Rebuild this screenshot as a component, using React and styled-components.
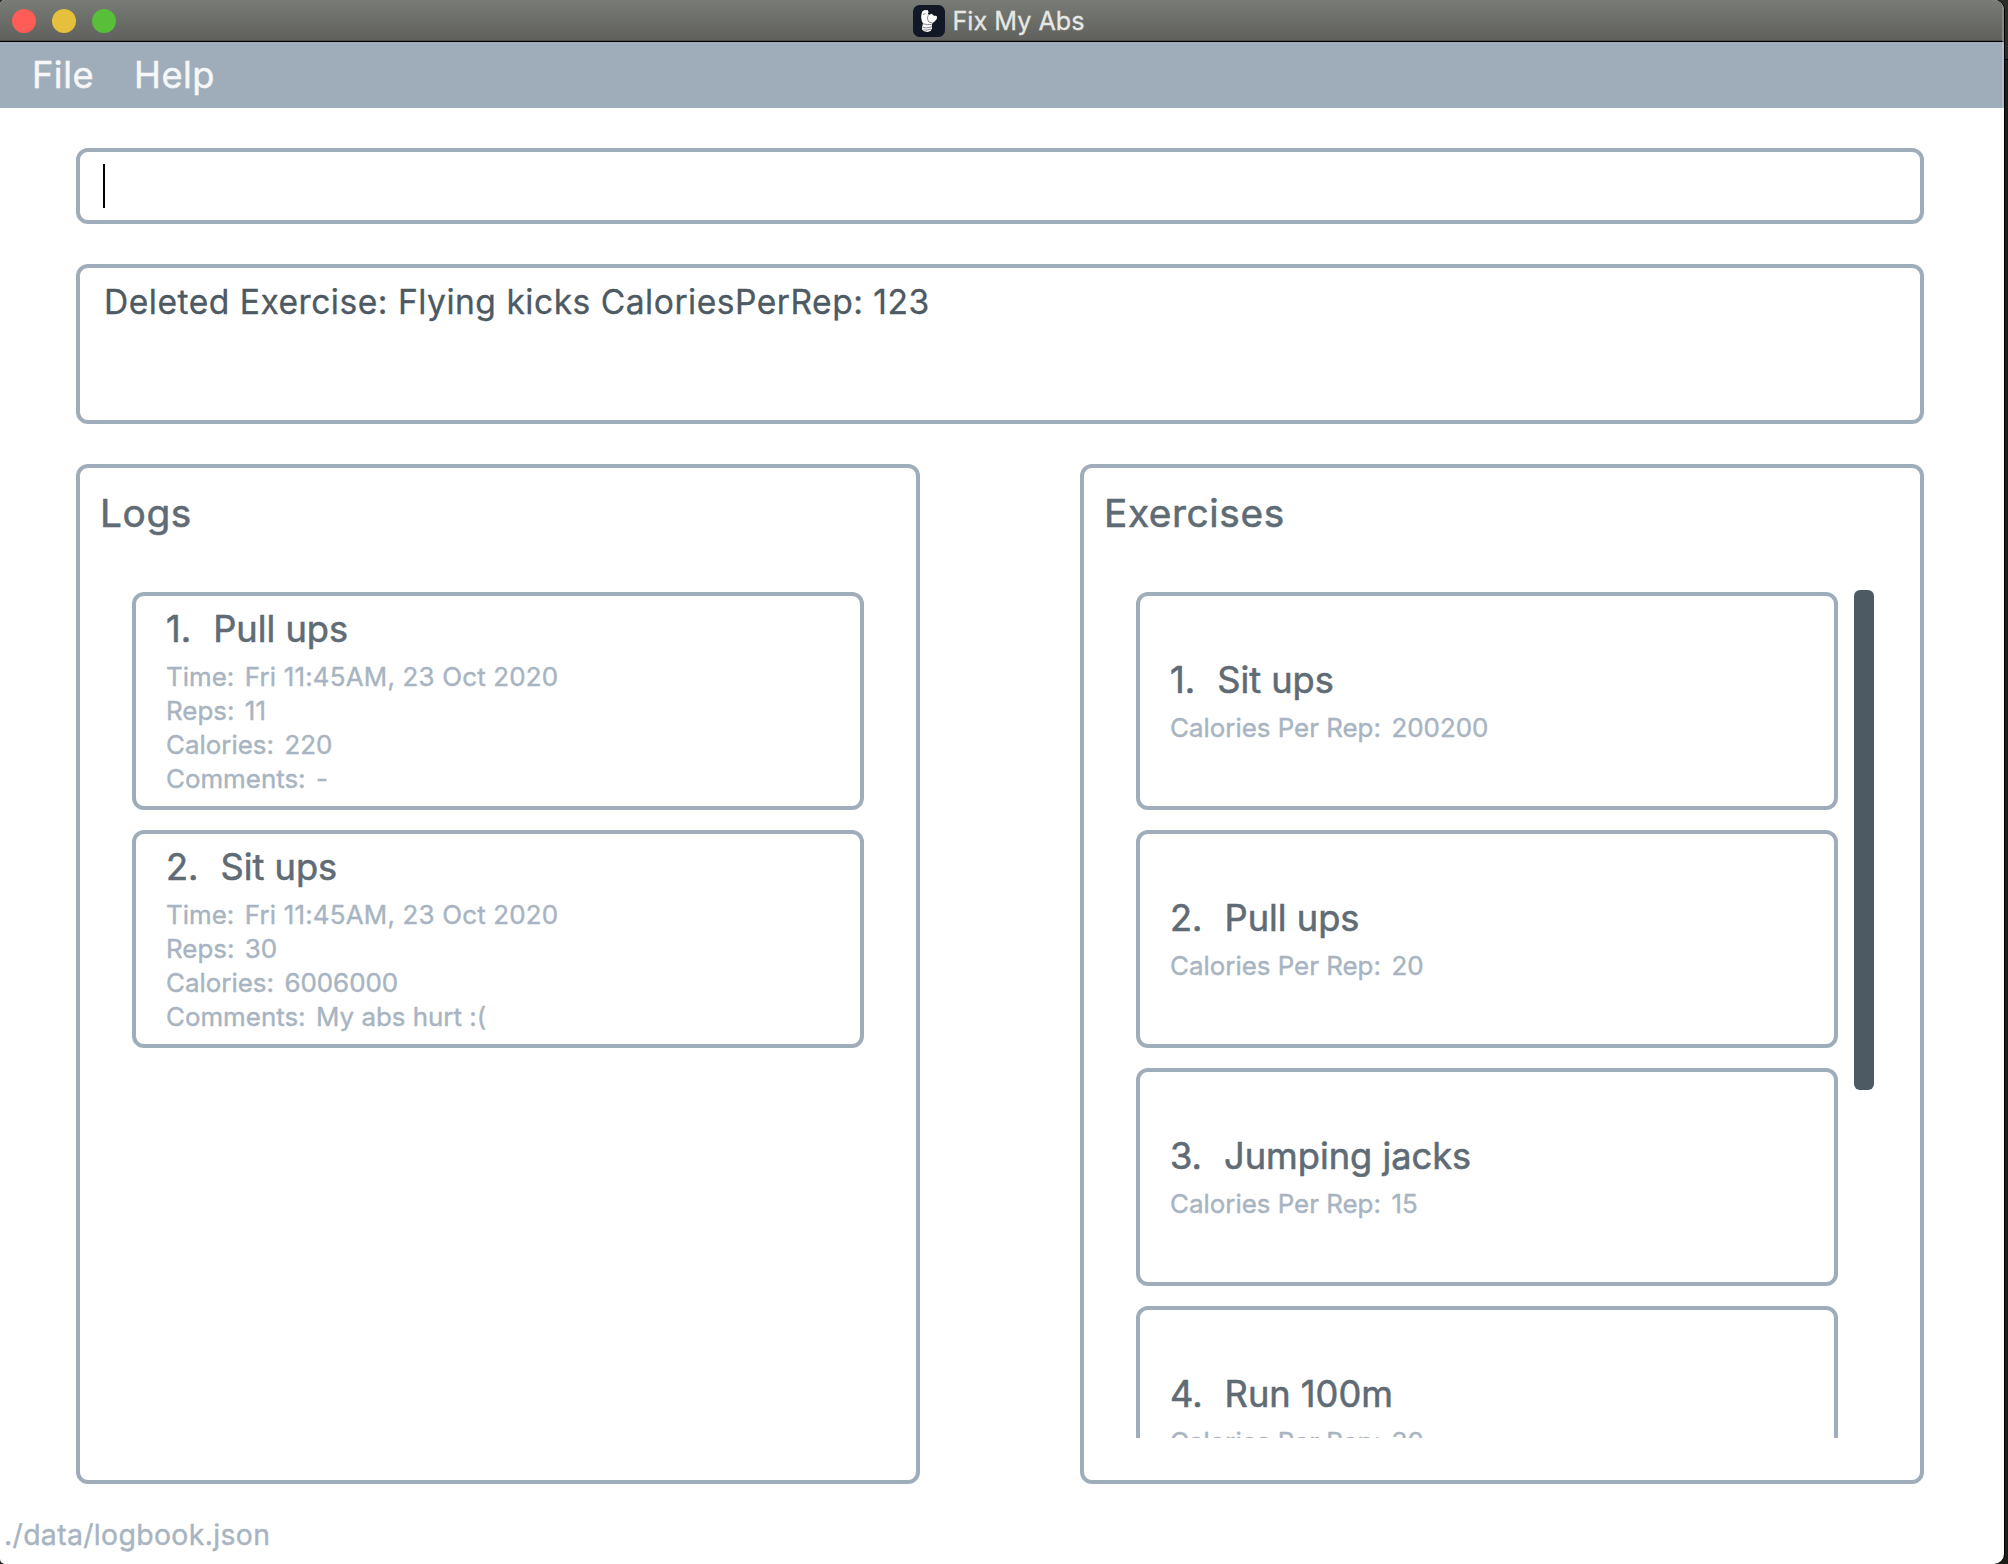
import React from "react";
import styled, { createGlobalStyle } from "styled-components";

const GlobalStyle = createGlobalStyle`
  *, *::before, *::after { box-sizing: border-box; }
  body {
    margin: 0;
    background: #1c1c17;
    font-family: Inter, "Liberation Sans", sans-serif;
    overflow: hidden;
  }
`;

const slate = "#9fadba";

const Desktop = styled.div`
  display: flex;
  width: 2008px;
  height: 1564px;
  background: linear-gradient(#2b2d29 0 59px, #000 59px 60px, #1d1d18 60px);
`;

const Window = styled.div`
  display: flex;
  flex-direction: column;
  width: 2004px;
  height: 1564px;
  background: #fff;
  border-radius: 5px 10px 10px 5px;
  box-shadow: 1px 0 0 #000;
  overflow: hidden;
`;

const TitleBar = styled.header`
  display: grid;
  grid-template-columns: 1fr auto 1fr;
  align-items: center;
  height: 42px;
  padding: 0 16px 0 12px;
  background: linear-gradient(#797b77, #60615c 40px, #4c4d49 40px);
  border-bottom: 1px solid #000;
  border-right: 2px solid #858783;
`;

const Lights = styled.div`
  display: flex;
  gap: 16px;
`;

const Light = styled.span`
  width: 24px;
  height: 24px;
  border-radius: 50%;
  background: ${(p) => p.$color};
`;

const WindowTitle = styled.div`
  display: flex;
  align-items: center;
  gap: 7px;
  height: 32px;
  color: #e6e8e4;
  font-size: 25.2px;
  line-height: 32px;
  -webkit-text-stroke: 0.3px currentColor;
`;

const AppIcon = styled.svg`
  display: block;
  width: 32px;
  height: 32px;
`;

const MenuBar = styled.nav`
  display: flex;
  align-items: center;
  gap: 40px;
  height: 66px;
  padding-left: 32px;
  background: ${slate};
  border-right: 2px solid #b1bcc6;
`;

const MenuItem = styled.span`
  color: #f5f7f9;
  font-size: 36.2px;
  line-height: 44px;
  letter-spacing: 0.5px;
  -webkit-text-stroke: 0.5px currentColor;
`;

const Content = styled.main`
  display: flex;
  flex-direction: column;
  gap: 40px;
  height: 1376px;
  padding: 40px 80px 0 76px;
`;

const Frame = styled.section`
  border: 4px solid ${slate};
  border-radius: 12px;
`;

const CommandBox = styled(Frame)`
  display: flex;
  align-items: center;
  height: 76px;
  padding-left: 23px;
`;

const Caret = styled.span`
  width: 2px;
  height: 44px;
  background: #000;
`;

const ResultBox = styled(Frame)`
  height: 160px;
  padding: 12px 24px;
  color: #4d5963;
  font-size: 33.6px;
  line-height: 44px;
  letter-spacing: 0.5px;
  -webkit-text-stroke: 0.3px currentColor;
`;

const Panels = styled.div`
  display: grid;
  grid-template-columns: 1fr 1fr;
  column-gap: 160px;
  height: 1020px;
`;

const Panel = styled(Frame)`
  display: flex;
  flex-direction: column;
  gap: 53px;
  padding: 21px 46px 0 52px;
`;

const PanelTitle = styled.h2`
  margin: 0 0 0 -32px;
  color: #5f6b75;
  font-size: 38.8px;
  font-weight: 400;
  line-height: 48px;
  letter-spacing: 0.6px;
  -webkit-text-stroke: 0.6px currentColor;
`;

const ListView = styled.div`
  display: flex;
  justify-content: space-between;
  height: 848px;
  overflow: hidden;
`;

const Cards = styled.div`
  display: flex;
  flex-direction: column;
  gap: 20px;
  width: ${(p) => p.$width}px;
  padding-top: 2px;
`;

const Card = styled.article`
  display: flex;
  flex: none;
  flex-direction: column;
  justify-content: center;
  height: 218px;
  padding-left: 30px;
  border: 4px solid ${slate};
  border-radius: 12px;
`;

const CardTitle = styled.h3`
  display: flex;
  gap: 22px;
  margin: 0 0 8px;
  color: #5f6b75;
  font-size: 36.2px;
  font-weight: 400;
  line-height: 45px;
  -webkit-text-stroke: 0.6px currentColor;
`;

const Detail = styled.div`
  display: flex;
  gap: 10.5px;
  color: #a8b4c1;
  font-size: 25.9px;
  line-height: 34px;
  -webkit-text-stroke: 0.4px currentColor;
`;

const DetailValue = styled.span`
  letter-spacing: ${(p) => (p.$wide ? "0.2px" : "0")};
`;

const ScrollThumb = styled.div`
  width: 20px;
  height: 500px;
  border-radius: 6px;
  background: #4d5a64;
`;

const StatusBar = styled.footer`
  display: flex;
  padding: 33px 0 0 4px;
  color: #a8b4c1;
  font-size: 28.4px;
  line-height: 36px;
  letter-spacing: 0.36px;
  -webkit-text-stroke: 0.4px currentColor;
`;

const logs = [
  {
    name: "Pull ups",
    details: [
      ["Time:", "Fri 11:45AM, 23 Oct 2020"],
      ["Reps:", "11"],
      ["Calories:", "220"],
      ["Comments:", "-"],
    ],
  },
  {
    name: "Sit ups",
    details: [
      ["Time:", "Fri 11:45AM, 23 Oct 2020"],
      ["Reps:", "30"],
      ["Calories:", "6006000"],
      ["Comments:", "My abs hurt :("],
    ],
  },
];

const exercises = [
  { name: "Sit ups", details: [["Calories Per Rep:", "200200"]] },
  { name: "Pull ups", details: [["Calories Per Rep:", "20"]] },
  { name: "Jumping jacks", details: [["Calories Per Rep:", "15"]] },
  { name: "Run 100m", details: [["Calories Per Rep:", "30"]] },
];

function CardList({ items, width }) {
  return (
    <Cards $width={width}>
      {items.map((item, i) => (
        <Card key={item.name}>
          <CardTitle>
            <span>{i + 1}.</span>
            <span>{item.name}</span>
          </CardTitle>
          {item.details.map(([label, value]) => (
            <Detail key={label}>
              <span>{label}</span>
              <DetailValue $wide={value.startsWith("Fri")}>{value}</DetailValue>
            </Detail>
          ))}
        </Card>
      ))}
    </Cards>
  );
}

function MuscleIcon() {
  return (
    <AppIcon viewBox="0 0 32 32">
      <rect width="32" height="32" rx="6.5" fill="#131826" />
      <path
        fill="#fff"
        d="M9.2 6.4 11 5.2 14.6 5 15.6 7 14.8 9.2 16.4 9.8 18.6 8.8 20.6 10.4 22.2 11 22.6 10.6 24 11.4 23.8 14 21.4 16.8 19.4 18 18.8 20.4 19 23.4 17.6 26 14.6 27 11 26.2 9 24.4 9.2 21.4 10 18.6 8.8 16 8.2 12.6 8.4 9.6Z"
      />
      <path
        fill="none"
        stroke="#131826"
        strokeWidth="0.5"
        d="M10 9.6 12.4 8.6M15.2 10 14.4 13.2 15.6 17M15.6 17 19 17.8M10 18.8 14.6 19.6 18.6 19.4M9.8 22.2 13.6 23 18.6 21.8M10.4 24.8 14 25.2 18 24"
      />
    </AppIcon>
  );
}

export default function App() {
  return (
    <Desktop>
      <GlobalStyle />
      <Window>
        <TitleBar>
          <Lights>
            <Light $color="#ff5c57" />
            <Light $color="#e6bf3d" />
            <Light $color="#58c038" />
          </Lights>
          <WindowTitle>
            <MuscleIcon />
            <span>Fix My Abs</span>
          </WindowTitle>
        </TitleBar>
        <MenuBar>
          <MenuItem>File</MenuItem>
          <MenuItem>Help</MenuItem>
        </MenuBar>
        <Content>
          <CommandBox>
            <Caret />
          </CommandBox>
          <ResultBox>
            Deleted Exercise: Flying kicks CaloriesPerRep: 123
          </ResultBox>
          <Panels>
            <Panel>
              <PanelTitle>Logs</PanelTitle>
              <ListView>
                <CardList items={logs} width={732} />
              </ListView>
            </Panel>
            <Panel>
              <PanelTitle>Exercises</PanelTitle>
              <ListView>
                <CardList items={exercises} width={702} />
                <ScrollThumb />
              </ListView>
            </Panel>
          </Panels>
        </Content>
        <StatusBar>./data/logbook.json</StatusBar>
      </Window>
    </Desktop>
  );
}
